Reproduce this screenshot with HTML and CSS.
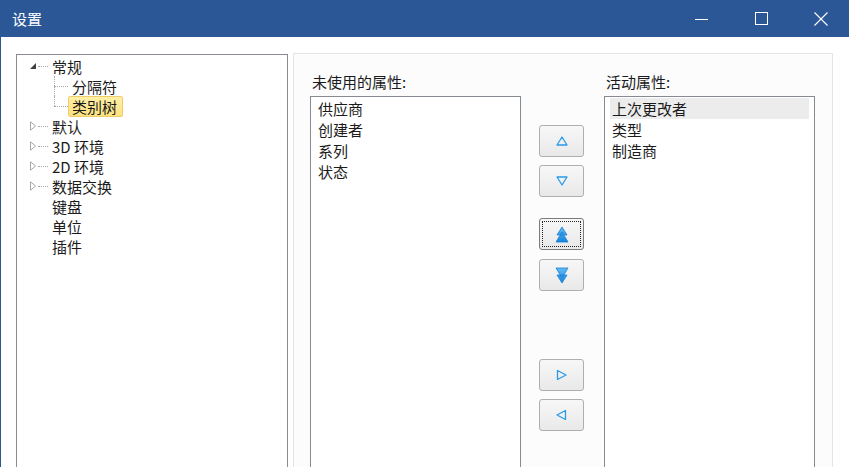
FILE: index.html
```html
<!DOCTYPE html>
<html lang="zh-CN">
<head>
    <meta charset="UTF-8">
    <meta name="viewport" content="width=device-width, initial-scale=1.0">
    <title>设置</title>
    <link rel="stylesheet" href="styles.css">
</head>
<body>
    <div class="titlebar">
        <span class="title">设置</span>
        <div class="controls">
            <span class="ctl"><svg width="13" height="13" viewBox="0 0 13 13"><path d="M0 7.5h13" stroke="#fff" stroke-width="1"/></svg></span>
            <span class="ctl"><svg width="13" height="13" viewBox="0 0 13 13"><rect x="0.5" y="0.5" width="12" height="12" fill="none" stroke="#fff" stroke-width="1"/></svg></span>
            <span class="ctl"><svg width="14" height="14" viewBox="0 0 14 14"><path d="M0.5 0.5l13 13M13.5 0.5l-13 13" stroke="#fff" stroke-width="1.1"/></svg></span>
        </div>
    </div>

    <div class="content">
        <!-- left: category tree -->
        <div class="tree">
            <ul class="nodes">
                <li>
                    <div class="row">
                        <svg class="tog" width="8" height="8" viewBox="0 0 8 8"><path d="M7 1V7H1z" fill="#404040"/></svg>
                        <span class="dots"></span>
                        <span class="label">常规</span>
                    </div>
                    <ul class="children">
                        <li class="row child"><span class="branch"></span><span class="label">分隔符</span></li>
                        <li class="row child last"><span class="branch"></span><span class="label sel">类别树</span></li>
                    </ul>
                </li>
                <li class="row">
                    <svg class="tog" width="8" height="10" viewBox="0 0 8 10"><path d="M1.5 0.8v8.4l5-4.2z" fill="none" stroke="#a8a8a8"/></svg>
                    <span class="dots"></span>
                    <span class="label">默认</span>
                </li>
                <li class="row">
                    <svg class="tog" width="8" height="10" viewBox="0 0 8 10"><path d="M1.5 0.8v8.4l5-4.2z" fill="none" stroke="#a8a8a8"/></svg>
                    <span class="dots"></span>
                    <span class="label">3D 环境</span>
                </li>
                <li class="row">
                    <svg class="tog" width="8" height="10" viewBox="0 0 8 10"><path d="M1.5 0.8v8.4l5-4.2z" fill="none" stroke="#a8a8a8"/></svg>
                    <span class="dots"></span>
                    <span class="label">2D 环境</span>
                </li>
                <li class="row">
                    <svg class="tog" width="8" height="10" viewBox="0 0 8 10"><path d="M1.5 0.8v8.4l5-4.2z" fill="none" stroke="#a8a8a8"/></svg>
                    <span class="dots"></span>
                    <span class="label">数据交换</span>
                </li>
                <li class="row leaf"><span class="label">键盘</span></li>
                <li class="row leaf"><span class="label">单位</span></li>
                <li class="row leaf"><span class="label">插件</span></li>
            </ul>
        </div>

        <!-- right: property lists -->
        <div class="props">
            <div class="col">
                <div class="cap">未使用的属性:</div>
                <ul class="list">
                    <li>供应商</li>
                    <li>创建者</li>
                    <li>系列</li>
                    <li>状态</li>
                </ul>
            </div>

            <div class="btns">
                <button class="btn b-up" title="上移">
                    <svg width="12" height="10" viewBox="0 0 12 10"><path d="M6 1L11 9H1z" fill="none" stroke="#2a9be9" stroke-width="1.3" stroke-linejoin="round"/></svg>
                </button>
                <button class="btn b-down" title="下移">
                    <svg width="12" height="10" viewBox="0 0 12 10"><path d="M1 1H11L6 9z" fill="none" stroke="#2a9be9" stroke-width="1.3" stroke-linejoin="round"/></svg>
                </button>
                <button class="btn b-top focus" title="移到顶部">
                    <svg width="14" height="17" viewBox="0 0 14 17">
                        <defs><linearGradient id="gu" x1="0" y1="0" x2="0" y2="1"><stop offset="0" stop-color="#62bdf6"/><stop offset="1" stop-color="#1583dc"/></linearGradient></defs>
                        <path d="M7 1L12 9H2z M7 6L13 16H1z" fill="url(#gu)" stroke="#1a7fd0" stroke-width="0.8" stroke-linejoin="round"/>
                    </svg>
                </button>
                <button class="btn b-bottom" title="移到底部">
                    <svg width="14" height="17" viewBox="0 0 14 17">
                        <defs><linearGradient id="gd" x1="0" y1="0" x2="0" y2="1"><stop offset="0" stop-color="#62bdf6"/><stop offset="1" stop-color="#1583dc"/></linearGradient></defs>
                        <path d="M1 1H13L7 11z M2 8H12L7 16z" fill="url(#gd)" stroke="#1a7fd0" stroke-width="0.8" stroke-linejoin="round"/>
                    </svg>
                </button>
                <button class="btn b-add" title="添加">
                    <svg width="11" height="12" viewBox="0 0 11 12"><path d="M1.5 1.5L10 6L1.5 10.5z" fill="none" stroke="#2a9be9" stroke-width="1.3" stroke-linejoin="round"/></svg>
                </button>
                <button class="btn b-remove" title="移除">
                    <svg width="11" height="12" viewBox="0 0 11 12"><path d="M9.5 1.5L1 6L9.5 10.5z" fill="none" stroke="#2a9be9" stroke-width="1.3" stroke-linejoin="round"/></svg>
                </button>
            </div>

            <div class="col">
                <div class="cap">活动属性:</div>
                <ul class="list">
                    <li class="sel">上次更改者</li>
                    <li>类型</li>
                    <li>制造商</li>
                </ul>
            </div>
        </div>
    </div>
</body>
</html>
```

FILE: styles.css
```css
* {
    box-sizing: border-box;
}
body {
    margin: 0;
    overflow: hidden;
    background-color: #fff;
    color: #1b1b1b;
    font-family: "Noto Sans CJK SC", "Noto Sans", sans-serif;
    font-size: 15px;
}
ul {
    list-style: none;
    margin: 0;
    padding: 0;
}

/* title bar */
.titlebar {
    height: 37px;
    background-color: #2b5797;
    color: #fff;
    display: flex;
    align-items: center;
    overflow: hidden;
}
.title {
    flex: 1;
    padding-left: 12px;
    line-height: 37px;
}
.controls {
    display: flex;
    height: 100%;
    margin-right: -2px;
}
.ctl {
    width: 60px;
    display: flex;
    align-items: center;
    justify-content: center;
}

.content {
    display: flex;
    height: 440px;
    padding: 16px 0 0 15px;
    border-left: 1px solid #2b5797;
}

/* tree */
.tree {
    width: 272px;
    margin-top: 1px;
    padding-top: 1px;
    border: 1px solid #888c93;
    background-color: #fff;
}
.row {
    position: relative;
    height: 20px;
    display: flex;
    align-items: center;
    padding-left: 12px;
}
.row.leaf {
    padding-left: 31px;
}
.row.child {
    padding-left: 37px;
}
.tog {
    flex: none;
    width: 8px;
}
.dots {
    width: 10px;
    margin-left: 1px;
    border-top: 1px dotted #a8a8a8;
}
.branch {
    width: 14px;
    border-top: 1px dotted #a8a8a8;
}
.row.child::before {
    content: "";
    position: absolute;
    left: 37px;
    top: 0;
    height: 100%;
    border-left: 1px dotted #a8a8a8;
}
.row.child.last::before {
    height: 10px;
}
.label {
    line-height: 19px;
    padding: 0 5px 0 3px;
    border: 1px solid transparent;
    border-radius: 2px;
    white-space: nowrap;
}
.label.sel {
    background: linear-gradient(#fff0a6, #fde27e);
    border-color: #efcd6a;
}

/* properties panel */
.props {
    width: 540px;
    margin-left: 5px;
    display: flex;
    padding: 18px 17px 0 16px;
    border: 1px solid #e3e5e9;
    background-color: #fcfcfd;
}
.col {
    width: 211px;
    display: flex;
    flex-direction: column;
}
.cap {
    line-height: 20px;
    padding-left: 2px;
    margin-bottom: 4px;
}
.list {
    flex: 1;
    border: 1px solid #868a91;
    background-color: #fff;
    padding: 1px 5px;
}
.list li {
    line-height: 21px;
    padding: 0 2px;
}
.list li.sel {
    background-color: #ececec;
}

.btns {
    width: 83px;
    display: flex;
    flex-direction: column;
    padding: 53px 0 0 18px;
}
.btn {
    width: 45px;
    height: 32px;
    padding: 0;
    display: flex;
    align-items: center;
    justify-content: center;
    border: 1px solid #afafaf;
    border-radius: 3px;
    background: linear-gradient(#f7f7f7, #e9e9e9);
}
.btn + .btn {
    margin-top: 8px;
}
.btn.b-top {
    margin-top: 21px;
}
.btn.b-bottom {
    margin-top: 9px;
}
.btn.b-add {
    margin-top: 68px;
}
.btn.focus {
    border-color: #7c7c7c;
    outline: 1px dotted #222;
    outline-offset: -4px;
}
```
